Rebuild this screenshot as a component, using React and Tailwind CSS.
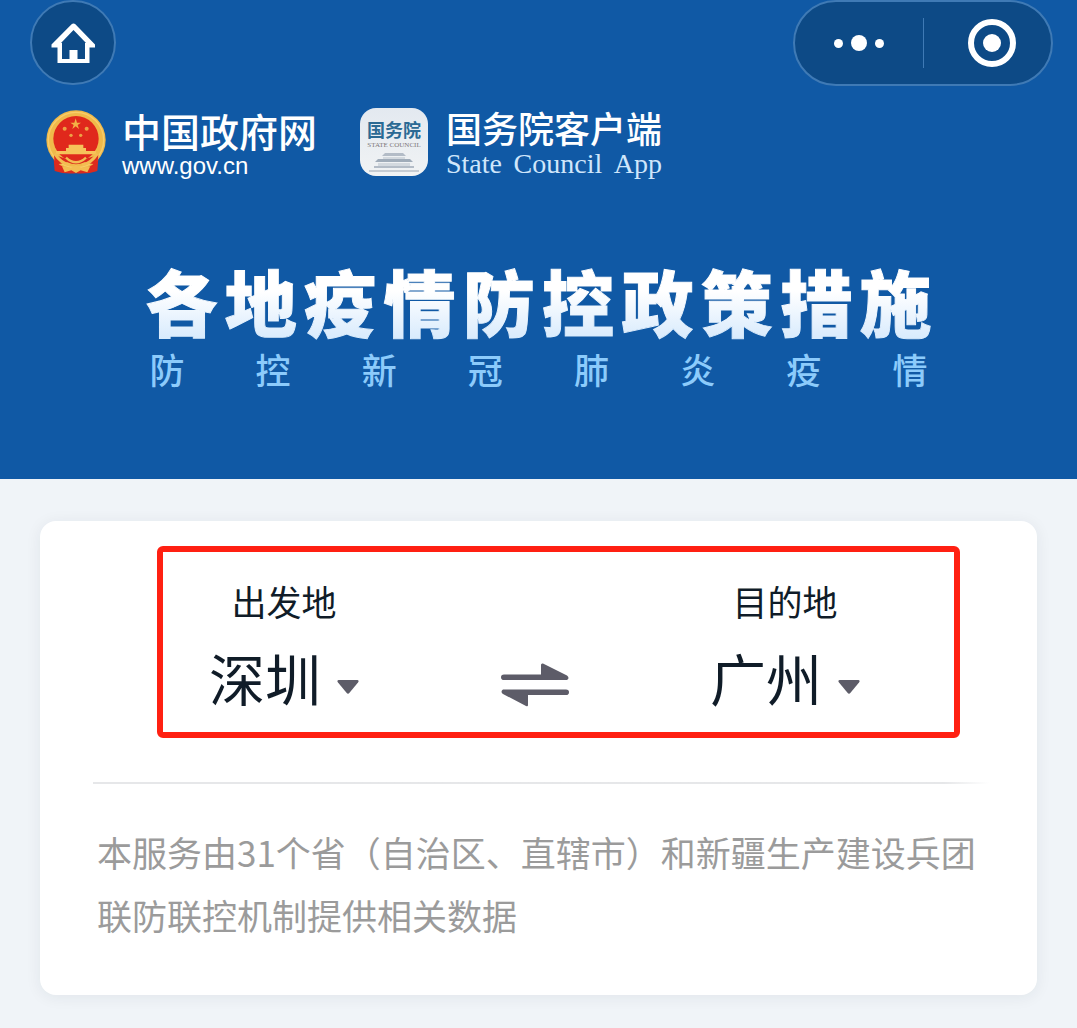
import React, { useState } from 'react';

const title = '各地疫情防控政策措施';
const subtitle = '防控新冠肺炎疫情';
const cities = ['深圳', '广州', '北京', '上海'];

const HomeIcon = () => (
  <svg viewBox="0 0 44 44" className="w-11 h-11" aria-hidden="true">
    <path
      d="M22.5 2.5 Q23.6 2.5 24.4 3.3 L44 23.6 V26.500 H38.500 V42 H6.5 V26.500 H0.500 V23.6 L20.6 3.3 Q21.4 2.5 22.5 2.5 Z M22.5 9 L10 22 H11 V38 H18.500 V29 H26.500 V38 H34 V22 H35 Z"
      fill="#fff"
      fillRule="evenodd"
    />
  </svg>
);

const Emblem = () => (
  <svg viewBox="36 44 180 190" className="w-15 h-16" aria-hidden="true">
    <path d="M58 178 L62 226 Q90 236 126 233 Q162 236 190 226 L194 178 Z" fill="#dc2a1e" />
    <circle cx="126" cy="133" r="89" fill="#f0b94a" />
    <circle cx="126" cy="133" r="83" fill="none" stroke="#f8cd6a" strokeWidth="4" />
    <circle cx="126" cy="129" r="68" fill="#e0281c" />
    <path d="M125 68 L129 81 L141 81 L131 88 L135 100 L125 92 L115 100 L119 88 L109 81 L121 81 Z" fill="#f3b145" />
    <g fill="#eda245">
      <circle cx="92" cy="99" r="6" />
      <circle cx="158" cy="99" r="6" />
      <circle cx="111" cy="119" r="5" />
      <circle cx="140" cy="119" r="5" />
    </g>
    <path d="M104 147 H148 V157 H156 V166 H186 V176 H66 V166 H96 V157 H104 Z" fill="#f6c35a" />
    <path d="M60 178 Q80 184 92 188 L160 188 Q176 184 193 178 L190 206 Q170 206 152 200 Q126 212 100 200 Q82 206 62 206 Z" fill="#dc2a1e" />
    <path d="M62 174 Q82 205 108 208 M190 174 Q170 205 144 208" fill="none" stroke="#f3bd52" strokeWidth="9" />
    <path d="M96 186 Q126 214 156 186" fill="none" stroke="#f3bd52" strokeWidth="7" />
    <path d="M84 212 L110 217 L126 207 L142 217 L169 212 L160 230 L140 224 L126 232 L112 224 L92 230 Z" fill="#f3bd52" />
  </svg>
);

const AppLogo = () => (
  <div className="w-17 h-17 rounded-2xl bg-gradient-to-b from-[#e3e9f0] to-[#f1f3f4] flex flex-col items-center pt-3 overflow-hidden">
    <span className="text-[18px] leading-[18px] font-bold text-[#2b6a94]">国务院</span>
    <span className="mt-1 text-[7px] leading-[6px] whitespace-nowrap font-['Liberation_Serif',serif] text-[#7d7779]">STATE COUNCIL</span>
    <svg viewBox="0 0 56 22" className="mt-1 w-14 h-[22px]" aria-hidden="true">
      <path d="M19 1 H37 L40 4 H16 Z" fill="#b3bcc7" />
      <path d="M17 5 H39 V7 H17 Z" fill="#d3d9df" />
      <path d="M12 7 H44 L47 10 H9 Z" fill="#a0acb9" />
      <path d="M12 11 H44 V14 H12 Z" fill="#d3d9df" />
      <path d="M8 14 H48 V16 H8 Z" fill="#b3bcc7" />
      <path d="M3 18 H53 V20 H3 Z" fill="#c6ccd3" />
    </svg>
  </div>
);

const SwapIcon = () => (
  <svg viewBox="0 0 68 44" className="w-17 h-11" fill="#5d5c68" aria-hidden="true">
    <path d="M3 11.5 H40 V2 Q40 0 42 0.5 L66 12.5 Q69 15 66 17 H3 Q0 17 0 14.2 Q0 11.5 3 11.5 Z" />
    <path d="M65 32 H27 V42 Q27 44 25 43 L2 31 Q-1 28.500 2 26.500 H65 Q68 26.500 68 29.200 Q68 32 65 32 Z" />
  </svg>
);

const CityPicker = ({ id, label, value, onChange }) => (
  <div className="flex flex-col items-center">
    <label htmlFor={id} className="text-[35px] leading-[48px]">{label}</label>
    <div className="mt-4 flex items-center gap-4">
      <select
        id={id}
        value={value}
        onChange={(e) => onChange(e.target.value)}
        className="appearance-none bg-transparent text-[56px] leading-[72px] outline-none cursor-pointer"
      >
        {cities.map((city) => (
          <option key={city} value={city}>{city}</option>
        ))}
      </select>
      <svg viewBox="0 0 22 14" className="mt-5 w-[22px] h-[14px]" aria-hidden="true">
        <path d="M1.500 0 H20.500 Q22.500 0.500 21 2.500 L12.500 12.800 Q11 14.500 9.500 12.800 L1 2.500 Q-0.500 0.500 1.500 0 Z" fill="#5d5c68" />
      </svg>
    </div>
  </div>
);

const App = () => {
  const [from, setFrom] = useState('深圳');
  const [to, setTo] = useState('广州');

  const handleSwap = () => {
    setFrom(to);
    setTo(from);
  };

  return (
    <div className="min-h-screen bg-[#f0f4f8] text-[#101c28] font-['Noto_Sans_CJK_SC',sans-serif]">
      <header className="bg-[#1059a5] text-white pb-[90px]">
        <div className="flex justify-between pl-[30px] pr-6">
          <button
            aria-label="首页"
            className="w-[86px] h-[85px] rounded-full border-2 border-[#3f7ab5] bg-[#0d4a86] flex items-center justify-center"
          >
            <HomeIcon />
          </button>
          <div className="w-[260px] h-[86px] rounded-full border-2 border-[#3f7ab5] bg-[#0d4a86] flex items-center">
            <button aria-label="更多" className="w-32 h-full flex items-center justify-center gap-2">
              <span className="w-[9px] h-[9px] rounded-full bg-white"></span>
              <span className="w-4 h-4 rounded-full bg-white"></span>
              <span className="w-[9px] h-[9px] rounded-full bg-white"></span>
            </button>
            <span className="w-px h-[50px] bg-[#3f7ab5]"></span>
            <button aria-label="关闭" className="flex-1 h-full flex items-center justify-center pl-2">
              <span className="w-12 h-12 rounded-full border-6 border-white flex items-center justify-center">
                <span className="w-[18px] h-[18px] rounded-full bg-white"></span>
              </span>
            </button>
          </div>
        </div>

        <div className="mt-[19px] flex items-center pl-[46px]">
          <Emblem />
          <div className="ml-4">
            <p className="text-[39px] leading-[48px] font-medium">中国政府网</p>
            <p className="text-[24px] leading-[24px] font-['Liberation_Sans',sans-serif]">www.gov.cn</p>
          </div>
          <div className="ml-[43px]">
            <AppLogo />
          </div>
          <div className="ml-[18px]">
            <p className="text-[36px] leading-[44px] font-medium">国务院客户端</p>
            <p className="flex justify-between text-[28px] leading-[30px] text-[#cfe6fb] font-['Liberation_Serif',serif]">
              <span>State</span> <span>Council</span> <span>App</span>
            </p>
          </div>
        </div>

        <div className="mx-auto mt-[76px] w-[73%]">
          <h1 className="flex justify-between text-[72px] leading-[90px] font-black bg-gradient-to-b from-white from-40% to-[#d3e8fc] bg-clip-text text-transparent [-webkit-text-stroke:1px_transparent]">
            {[...title].map((char, i) => (
              <span key={i}>{char}</span>
            ))}
          </h1>
          <p className="mt-1 px-1 flex justify-between text-[35px] leading-[40px] font-medium text-[#8ccbfb]">
            {[...subtitle].map((char, i) => (
              <span key={i}>{char}</span>
            ))}
          </p>
        </div>
      </header>

      <main className="px-10 pt-[42px] pb-8">
        <section className="rounded-2xl bg-white shadow-[0_2px_16px_rgba(30,40,60,0.07)] pt-[25px] pb-[49px]">
          <div className="ml-[117px] mr-[77px] rounded-md border-6 border-[#ff2012] pl-[46px] pr-[94px] pt-[25px] pb-[19px] flex justify-between items-end">
            <CityPicker id="from" label="出发地" value={from} onChange={setFrom} />
            <button aria-label="交换" onClick={handleSwap} className="mb-[6px] cursor-pointer">
              <SwapIcon />
            </button>
            <CityPicker id="to" label="目的地" value={to} onChange={setTo} />
          </div>
          <hr className="ml-[53px] mr-12 mt-11 border-0 h-[2px] bg-gradient-to-r from-[#e6e7e9] from-95% to-white" />
          <p className="mx-[57px] mt-9 text-[35px] leading-[63px] text-[#9b9b9b]">
            本服务由31个省（自治区、直辖市）和新疆生产建设兵团联防联控机制提供相关数据
          </p>
        </section>
      </main>
    </div>
  );
};

export default App;
